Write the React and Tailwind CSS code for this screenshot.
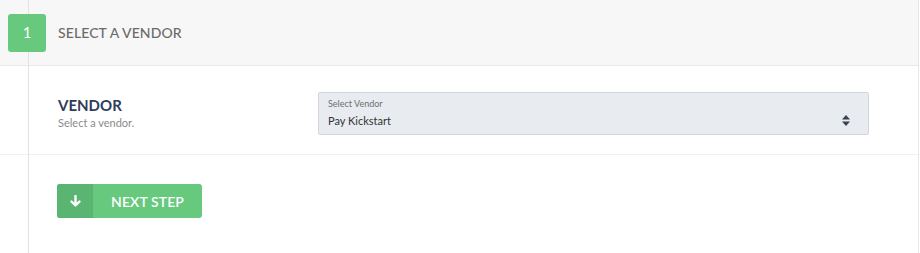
import React from 'react';

const App = () => {
  return (
    <div className="w-[920px] h-[253px] bg-white overflow-hidden" style={{ fontFamily: 'Lato, "Open Sans", sans-serif' }}>
      <div className="relative w-[919px] h-full border-r border-[#e6e6e6]">
        {/* ligne verticale des étapes */}
        <div className="absolute left-[28px] top-0 bottom-0 w-px bg-[#e2e2e2]" />

        {/* En-tête de l'étape */}
        <div className="h-[66px] bg-[#f7f7f7] border-b border-[#e9e9e9] flex items-center pl-[8px]">
          <div className="relative z-10 w-[38px] h-[38px] rounded-[3px] bg-[#66c97e] text-white flex items-center justify-center text-[15px]">
            1
          </div>
          <div className="ml-[12px] text-[14px] font-medium text-[#6b6b6b] tracking-[0.1px]">SELECT A VENDOR</div>
        </div>

        {/* Champ vendor */}
        <div className="h-[89px] border-b border-[#f0f0f0] flex items-center pt-[6px] pl-[58px] pr-[49px]">
          <div className="w-[260px] mb-[1px]">
            <div className="text-[15px] font-bold text-[#2f3d5b] leading-[18px]">VENDOR</div>
            <div className="text-[11px] text-[#8a8a8a] leading-[14px] mt-[2px]">Select a vendor.</div>
          </div>
          <div className="flex-1 h-[43px] bg-[#e8ebf0] border border-[#d2d6dc] rounded-[2px] pl-[9px] pr-[18px] flex items-center">
            <div className="flex-1">
              <div className="text-[9px] text-[#6f6f6f] leading-[10px]">Select Vendor</div>
              <div className="text-[11px] text-[#333] leading-[14px] mt-[5px]">Pay Kickstart</div>
            </div>
            <svg width="8" height="11" viewBox="0 0 8 11" className="mt-[14px]">
              <path d="M4 0 L8 4.5 L0 4.5 Z" fill="#3a4250" />
              <path d="M0 6.5 L8 6.5 L4 11 Z" fill="#3a4250" />
            </svg>
          </div>
        </div>

        {/* Bouton étape suivante */}
        <div className="pt-[29px] pl-[57px]">
          <button className="flex h-[34px] w-[145px] rounded-[3px] overflow-hidden bg-[#66c97e] text-white">
            <span className="w-[36px] h-full bg-[#5bb572] flex items-center justify-center">
              <svg width="11" height="12" viewBox="0 0 11 12">
                <path d="M5.5 1 V10 M1.5 6.5 L5.5 10.5 L9.5 6.5" stroke="white" strokeWidth="2.4" fill="none" strokeLinecap="round" strokeLinejoin="round" />
              </svg>
            </span>
            <span className="flex-1 flex items-center justify-center text-[14px] font-semibold tracking-[0.1px]">NEXT STEP</span>
          </button>
        </div>
      </div>
    </div>
  );
};

export default App;
